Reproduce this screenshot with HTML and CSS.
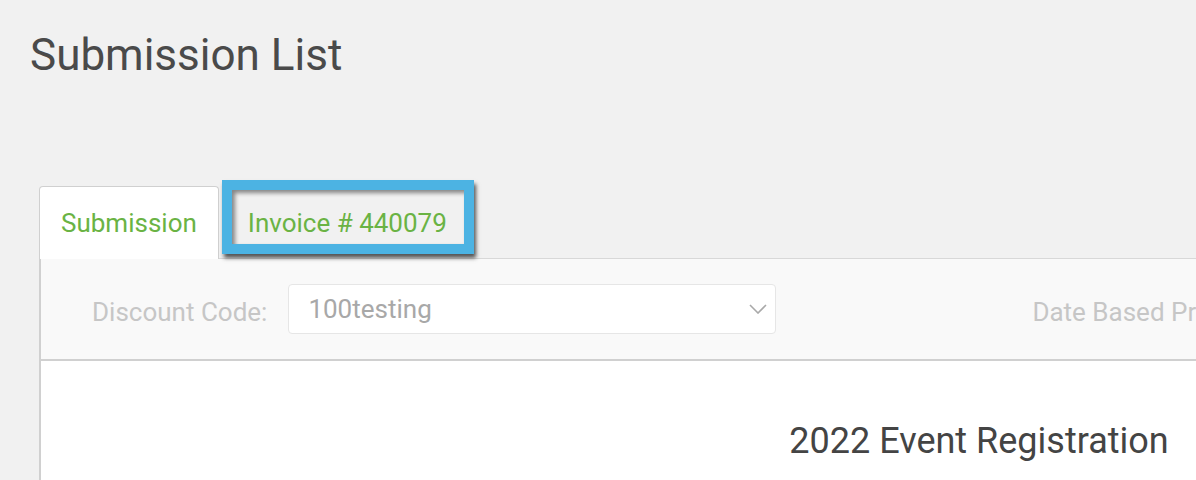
FILE: index.html
```html
<!DOCTYPE html>
<html lang="en">
<head>
  <meta charset="UTF-8">
  <meta name="viewport" content="width=device-width, initial-scale=1.0">
  <title>Submission List</title>
  <link rel="stylesheet" href="styles.css">
</head>
<body>
  <div class="page">
    <h1 class="page-title">Submission List</h1>

    <div class="tabs">
      <a class="tab tab-active" href="#">Submission</a>
      <a class="tab" href="#">Invoice # 440079</a>
      <span class="highlight"></span>
    </div>

    <div class="panel">
      <div class="filters">
        <div class="field">
          <label for="discount">Discount Code:</label>
          <div class="select" id="discount">
            <span>100testing</span>
            <svg class="chevron" width="18" height="10" viewBox="0 0 18 10">
              <path d="M1 1 L9 9 L17 1" fill="none" stroke="#a9a9a9" stroke-width="1.6"/>
            </svg>
          </div>
        </div>
        <div class="field field-date">
          <label for="pricing">Date Based Pricing:</label>
        </div>
      </div>

      <div class="content">
        <h2 class="form-title">2022 Event Registration</h2>
      </div>
    </div>
  </div>
</body>
</html>
```

FILE: styles.css
```css
/* Page */
body {
  margin: 0;
  background-color: #f1f1f1;
  font-family: Roboto, "Liberation Sans", sans-serif;
  overflow: hidden;
}

.page {
  padding-left: 30px;
}

.page-title {
  margin: 29px 0 0;
  font-size: 44px;
  font-weight: 400;
  color: #4a4a4a;
}

/* Tabs */
.tabs {
  position: relative;
  display: flex;
  margin: 105px 0 0 9px;
  border-bottom: 1px solid #d8d8d8;
  width: 1900px;
}

.tab {
  display: flex;
  align-items: center;
  height: 71px;
  padding: 0 22px;
  font-size: 26px;
  color: #6ab344;
  text-decoration: none;
  border: 1px solid transparent;
  border-bottom: none;
  border-radius: 4px 4px 0 0;
}

.tab-active {
  padding: 0 21px;
  background-color: #fff;
  border-color: #d0d0d0;
  margin-bottom: -1px;
  height: 72px;
}

.tab + .tab {
  margin-left: 6px;
}

/* annotation box drawn over the invoice tab */
.highlight {
  position: absolute;
  left: 183px;
  top: -6px;
  width: 252px;
  height: 74px;
  box-sizing: border-box;
  border: 10px solid #4cb3e3;
  box-shadow: 2px 4px 4px rgba(0, 0, 0, 0.65), inset 3px 3px 4px rgba(0, 0, 0, 0.45);
  pointer-events: none;
}

/* Panel */
.panel {
  margin-left: 9px;
  width: 1876px;
  border-left: 2px solid #d0d0d0;
  background-color: #fff;
}

.filters {
  display: flex;
  align-items: center;
  height: 100px;
  padding-left: 51px;
  background-color: #f9f9f9;
  border-bottom: 2px solid #d0d0d0;
}

.field {
  display: flex;
  align-items: center;
  gap: 21px;
}

.field label {
  padding-top: 5px;
  font-size: 26px;
  color: #c6c6c6;
}

.field-date {
  margin-left: 256px;
}

.select {
  display: flex;
  align-items: center;
  justify-content: space-between;
  box-sizing: border-box;
  width: 488px;
  height: 50px;
  padding: 0 8px 0 19px;
  background-color: #fff;
  border: 1px solid #e6e6e6;
  border-radius: 4px;
  font-size: 26px;
  color: #a8a8a8;
}

.content {
  height: 200px;
  padding-top: 59px;
  text-align: center;
}

.form-title {
  margin: 0;
  font-size: 36px;
  font-weight: 400;
  color: #444;
}
```
